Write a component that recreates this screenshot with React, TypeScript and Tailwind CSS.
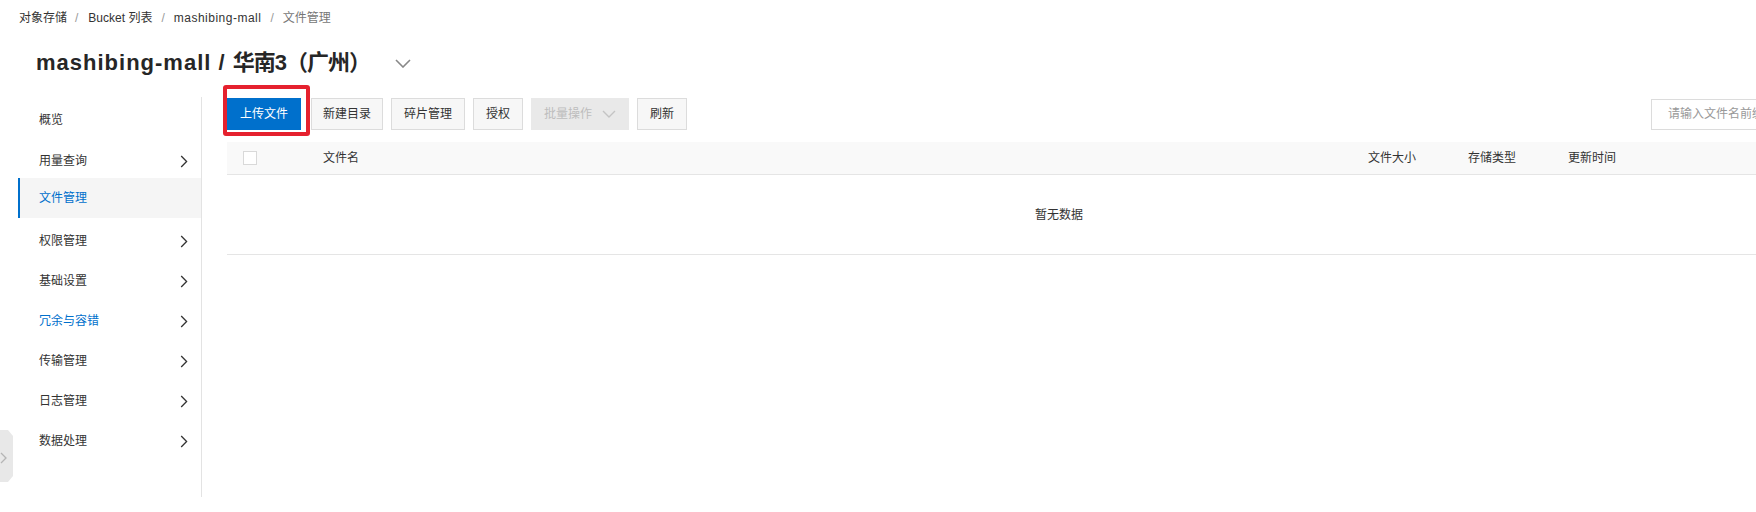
import React from "react";

const FONT = { fontFamily: '"Liberation Sans", "Noto Sans CJK SC", sans-serif' };

function RightChevron({ color = "#333" }: { color?: string }) {
  return (
    <svg width="8" height="13" viewBox="0 0 8 13" fill="none">
      <path d="M1.2 1 L6.6 6.5 L1.2 12" stroke={color} strokeWidth="1.3" />
    </svg>
  );
}

function DownChevron({ color = "#888", w = 16, h = 9, sw = 1.6 }: { color?: string; w?: number; h?: number; sw?: number }) {
  return (
    <svg width={w} height={h} viewBox={`0 0 ${w} ${h}`} fill="none">
      <path d={`M1 1 L${w / 2} ${h - 1} L${w - 1} 1`} stroke={color} strokeWidth={sw} />
    </svg>
  );
}

const menu = [
  { label: "概览", chevron: false, first: true },
  { label: "用量查询", chevron: true },
  { label: "文件管理", chevron: false, active: true },
  { label: "权限管理", chevron: true },
  { label: "基础设置", chevron: true },
  { label: "冗余与容错", chevron: true, blue: true },
  { label: "传输管理", chevron: true },
  { label: "日志管理", chevron: true },
  { label: "数据处理", chevron: true },
];

export default function App() {
  return (
    <div className="relative w-full h-[512px] overflow-hidden bg-white text-[#333]" style={FONT}>
      {/* breadcrumb */}
      <div className="h-[36px] flex items-center pl-[19px] text-[12px] leading-[18px] whitespace-nowrap">
        <span>对象存储</span>
        <span className="ml-[8px] mr-[10px] text-[#999]">/</span>
        <span>Bucket 列表</span>
        <span className="mx-[9px] text-[#999]">/</span>
        <span className="tracking-[0.5px]">mashibing-mall</span>
        <span className="mx-[9px] text-[#999]">/</span>
        <span className="text-[#777]">文件管理</span>
      </div>

      {/* title */}
      <div className="h-[61px] pt-[12px] pl-[36px] flex items-start">
        <div className="flex items-center h-[30px]">
          <h1 className="text-[22px] leading-[30px] font-bold text-[#262626] whitespace-nowrap">
            <span className="tracking-[1px]">mashibing-mall / </span>
            <span className="tracking-[-1px]">华南3（广州）</span>
          </h1>
          <span className="ml-[25px] flex items-center">
            <DownChevron />
          </span>
        </div>
      </div>

      {/* main */}
      <div className="flex">
        <aside className="ml-[18px] w-[184px] h-[400px] border-r border-[#e3e3e3] pt-[1px] shrink-0">
          {menu.map((m) => (
            <div
              key={m.label}
              className={
                m.active
                  ? "h-[40px] flex items-center justify-between pl-[19px] pr-[13px] bg-[#f5f5f5] border-l-2 border-[#0070cc] text-[#0070cc] text-[12px]"
                  : m.first
                  ? "h-[40px] flex items-center justify-between pl-[21px] pr-[13px] pt-[3px] text-[12px]"
                  : "h-[40px] flex items-center justify-between pl-[21px] pr-[13px] pt-[6px] text-[12px]"
              }
            >
              <span className={m.blue ? "text-[#0070cc]" : m.active ? "text-[#0070cc]" : "text-[#333]"}>{m.label}</span>
              {m.chevron && <RightChevron />}
            </div>
          ))}
        </aside>

        <section className="pl-[25px] w-[1689px] shrink-0 pt-[1px]">
          {/* toolbar */}
          <div className="flex items-center h-[32px] text-[12px]">
            <div className="relative">
              <button className="h-[32px] w-[74px] bg-[#0070cc] text-white flex items-center justify-center">
                上传文件
              </button>
              <div className="absolute left-[-4px] top-[-13px] w-[87px] h-[51px] border-[4px] border-[#e5212e] rounded-[3px] pointer-events-none" />
            </div>
            <button className="ml-[10px] h-[32px] w-[72px] border border-[#dcdcdc] bg-[#f7f7f7] text-[#333] flex items-center justify-center">
              新建目录
            </button>
            <button className="ml-[8px] h-[32px] w-[74px] border border-[#dcdcdc] bg-[#f7f7f7] text-[#333] flex items-center justify-center">
              碎片管理
            </button>
            <button className="ml-[8px] h-[32px] w-[50px] border border-[#dcdcdc] bg-[#f7f7f7] text-[#333] flex items-center justify-center">
              授权
            </button>
            <button className="ml-[8px] h-[32px] w-[98px] bg-[#e9e9e9] text-[#bdbdbd] flex items-center pl-[13px]">
              <span>批量操作</span>
              <span className="ml-[10px] flex items-center">
                <DownChevron color="#c4c4c4" w={14} h={8} sw={1.4} />
              </span>
            </button>
            <button className="ml-[8px] h-[32px] w-[50px] border border-[#dcdcdc] bg-[#f7f7f7] text-[#333] flex items-center justify-center">
              刷新
            </button>
            <div className="ml-auto h-[31px] w-[240px] border border-[#dcdcdc] bg-white flex items-center pl-[16px] text-[#999] whitespace-nowrap">
              请输入文件名前缀搜索
            </div>
          </div>

          {/* table */}
          <div className="mt-[12px] w-[1664px] text-[12px]">
            <div className="h-[33px] bg-[#f9f9f9] border-b border-[#e5e5e5] grid grid-cols-[96px_1045px_100px_100px_1fr] items-center">
              <div className="pl-[16px] flex items-center">
                <span className="w-[14px] h-[14px] border border-[#d9d9d9] bg-white block" />
              </div>
              <div>文件名</div>
              <div>文件大小</div>
              <div>存储类型</div>
              <div>更新时间</div>
            </div>
            <div className="h-[80px] border-b border-[#e5e5e5] flex items-center justify-center">
              暂无数据
            </div>
          </div>
        </section>
      </div>

      {/* collapse tab */}
      <div className="absolute left-0 top-[430px] w-[13px] h-[52px]">
        <svg width="13" height="52" viewBox="0 0 13 52" className="absolute inset-0">
          <polygon points="0,0 8,0 13,6 13,46 8,52 0,52" fill="#e8e8e8" />
        </svg>
        <svg width="8" height="12" viewBox="0 0 8 12" className="absolute left-[0px] top-[22px]" fill="none">
          <path d="M1 1 L6 6 L1 11" stroke="#b5b5b5" strokeWidth="1.3" />
        </svg>
      </div>
    </div>
  );
}
